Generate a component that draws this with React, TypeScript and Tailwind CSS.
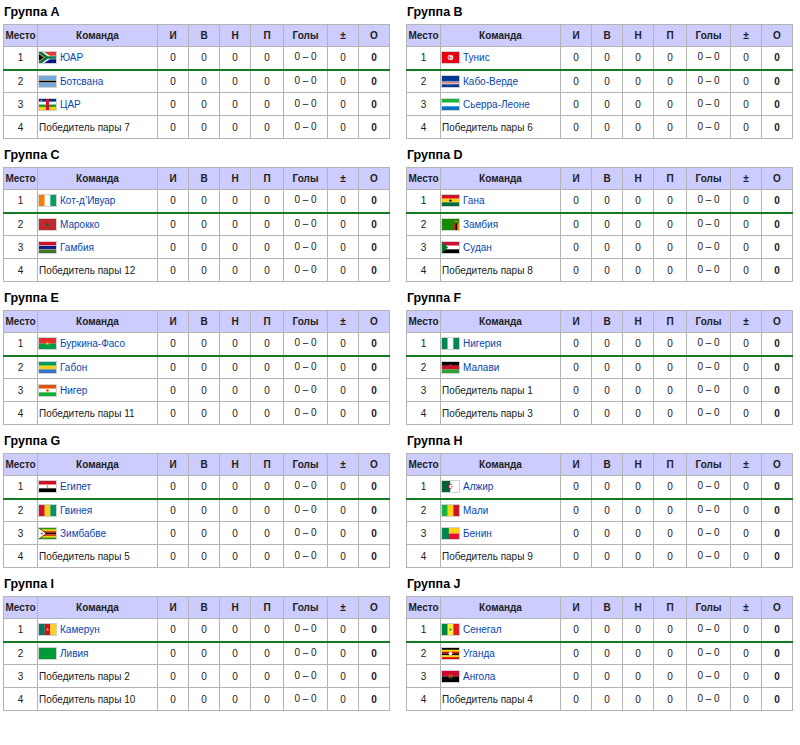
import type { ReactNode } from 'react'

type Row = { team: string; flag?: string }
type Group = { name: string; rows: Row[] }

const groups: Group[] = [
  { name: 'A', rows: [{ team: 'ЮАР', flag: 'za' }, { team: 'Ботсвана', flag: 'bw' }, { team: 'ЦАР', flag: 'cf' }, { team: 'Победитель пары 7' }] },
  { name: 'B', rows: [{ team: 'Тунис', flag: 'tn' }, { team: 'Кабо-Верде', flag: 'cv' }, { team: 'Сьерра-Леоне', flag: 'sl' }, { team: 'Победитель пары 6' }] },
  { name: 'C', rows: [{ team: 'Кот-д’Ивуар', flag: 'ci' }, { team: 'Марокко', flag: 'ma' }, { team: 'Гамбия', flag: 'gm' }, { team: 'Победитель пары 12' }] },
  { name: 'D', rows: [{ team: 'Гана', flag: 'gh' }, { team: 'Замбия', flag: 'zm' }, { team: 'Судан', flag: 'sd' }, { team: 'Победитель пары 8' }] },
  { name: 'E', rows: [{ team: 'Буркина-Фасо', flag: 'bf' }, { team: 'Габон', flag: 'ga' }, { team: 'Нигер', flag: 'ne' }, { team: 'Победитель пары 11' }] },
  { name: 'F', rows: [{ team: 'Нигерия', flag: 'ng' }, { team: 'Малави', flag: 'mw' }, { team: 'Победитель пары 1' }, { team: 'Победитель пары 3' }] },
  { name: 'G', rows: [{ team: 'Египет', flag: 'eg' }, { team: 'Гвинея', flag: 'gn' }, { team: 'Зимбабве', flag: 'zw' }, { team: 'Победитель пары 5' }] },
  { name: 'H', rows: [{ team: 'Алжир', flag: 'dz' }, { team: 'Мали', flag: 'ml' }, { team: 'Бенин', flag: 'bj' }, { team: 'Победитель пары 9' }] },
  { name: 'I', rows: [{ team: 'Камерун', flag: 'cm' }, { team: 'Ливия', flag: 'ly' }, { team: 'Победитель пары 2' }, { team: 'Победитель пары 10' }] },
  { name: 'J', rows: [{ team: 'Сенегал', flag: 'sn' }, { team: 'Уганда', flag: 'ug' }, { team: 'Ангола', flag: 'ao' }, { team: 'Победитель пары 4' }] },
]

// stripe helpers, viewBox is 90x60
function hStripes(colors: string[]) {
  const h = 60 / colors.length
  return colors.map((c, i) => <rect key={i} x="0" y={i * h} width="90" height={h + 0.5} fill={c} />)
}
function vStripes(colors: string[]) {
  const w = 90 / colors.length
  return colors.map((c, i) => <rect key={i} x={i * w} y="0" width={w + 0.5} height="60" fill={c} />)
}
const star = (cx: number, cy: number, r: number, fill: string) => {
  const pts = []
  for (let i = 0; i < 10; i++) {
    const a = (Math.PI / 5) * i - Math.PI / 2
    const rr = i % 2 === 0 ? r : r * 0.4
    pts.push(`${cx + rr * Math.cos(a)},${cy + rr * Math.sin(a)}`)
  }
  return <polygon points={pts.join(' ')} fill={fill} />
}

const flags: Record<string, ReactNode> = {
  za: (
    <>
      <rect width="90" height="30" fill="#e03c31" />
      <rect y="30" width="90" height="30" fill="#001489" />
      <polygon points="0,0 27,0 57,20 90,20 90,40 57,40 27,60 0,60" fill="#fff" />
      <polygon points="0,0 16,0 46,23 90,23 90,37 46,37 16,60 0,60" fill="#007749" />
      <polygon points="0,7 31,30 0,53" fill="#ffb612" />
      <polygon points="0,12 25,30 0,48" fill="#000" />
    </>
  ),
  bw: (
    <>
      <rect width="90" height="60" fill="#75aadb" />
      <rect y="22" width="90" height="16" fill="#fff" />
      <rect y="25" width="90" height="10" fill="#000" />
    </>
  ),
  cf: (
    <>
      {hStripes(['#003082', '#fff', '#289728', '#ffce00'])}
      <rect x="37" width="16" height="60" fill="#d21034" />
      {star(12, 7.5, 6, '#ffce00')}
    </>
  ),
  tn: (
    <>
      <rect width="90" height="60" fill="#e70013" />
      <circle cx="45" cy="30" r="15" fill="#fff" />
      <circle cx="45" cy="30" r="11" fill="#e70013" />
      <circle cx="48" cy="30" r="9" fill="#fff" />
      {star(48, 30, 6, '#e70013')}
    </>
  ),
  cv: (
    <>
      <rect width="90" height="60" fill="#003893" />
      <rect y="30" width="90" height="15" fill="#fff" />
      <rect y="35" width="90" height="5" fill="#cf2027" />
      <circle cx="34" cy="38" r="14" fill="none" stroke="#f7d116" strokeWidth="2" strokeDasharray="2 4" />
    </>
  ),
  sl: <>{hStripes(['#1eb53a', '#fff', '#0072c6'])}</>,
  ci: <>{vStripes(['#f77f00', '#fff', '#009e60'])}</>,
  ma: (
    <>
      <rect width="90" height="60" fill="#c1272d" />
      {star(45, 30, 12, '#006233')}
    </>
  ),
  gm: (
    <>
      <rect width="90" height="60" fill="#ce1126" />
      <rect y="18" width="90" height="24" fill="#fff" />
      <rect y="21" width="90" height="18" fill="#0c1c8c" />
      <rect y="42" width="90" height="18" fill="#3a7728" />
    </>
  ),
  gh: (
    <>
      {hStripes(['#ce1126', '#fcd116', '#006b3f'])}
      {star(45, 30, 10, '#000')}
    </>
  ),
  zm: (
    <>
      <rect width="90" height="60" fill="#198a00" />
      <rect x="63" y="24" width="9" height="36" fill="#de2010" />
      <rect x="72" y="24" width="9" height="36" fill="#000" />
      <rect x="81" y="24" width="9" height="36" fill="#ef7d00" />
      <ellipse cx="76" cy="14" rx="9" ry="4" fill="#ef7d00" />
    </>
  ),
  sd: (
    <>
      {hStripes(['#d21034', '#fff', '#000'])}
      <polygon points="0,0 32,30 0,60" fill="#007229" />
    </>
  ),
  bf: (
    <>
      {hStripes(['#ef2b2d', '#009e49'])}
      {star(45, 30, 11, '#fcd116')}
    </>
  ),
  ga: <>{hStripes(['#009e60', '#fcd116', '#3a75c4'])}</>,
  ne: (
    <>
      {hStripes(['#e05206', '#fff', '#0db02b'])}
      <circle cx="45" cy="30" r="7" fill="#e05206" />
    </>
  ),
  ng: <>{vStripes(['#008751', '#fff', '#008751'])}</>,
  mw: (
    <>
      {hStripes(['#000', '#ce1126', '#339e35'])}
      <circle cx="45" cy="20" r="9" fill="#ce1126" />
    </>
  ),
  eg: (
    <>
      {hStripes(['#ce1126', '#fff', '#000'])}
      <rect x="41" y="24" width="8" height="12" fill="#c09300" />
    </>
  ),
  gn: <>{vStripes(['#ce1126', '#fcd116', '#009460'])}</>,
  zw: (
    <>
      {hStripes(['#319208', '#ffd200', '#de2010', '#000', '#de2010', '#ffd200', '#319208'])}
      <polygon points="0,0 40,30 0,60" fill="#000" />
      <polygon points="0,3 36,30 0,57" fill="#fff" />
      {star(14, 30, 8, '#de2010')}
    </>
  ),
  dz: (
    <>
      <rect width="45" height="60" fill="#006233" />
      <rect x="45" width="45" height="60" fill="#fff" />
      <circle cx="45" cy="30" r="13" fill="#d21034" />
      <circle cx="49" cy="30" r="10.5" fill="#fff" />
      {star(52, 30, 6, '#d21034')}
    </>
  ),
  ml: <>{vStripes(['#14b53a', '#fcd116', '#ce1126'])}</>,
  bj: (
    <>
      <rect width="90" height="30" fill="#fcd116" />
      <rect y="30" width="90" height="30" fill="#e8112d" />
      <rect width="36" height="60" fill="#008751" />
    </>
  ),
  cm: (
    <>
      {vStripes(['#007a5e', '#ce1126', '#fcd116'])}
      {star(45, 30, 9, '#fcd116')}
    </>
  ),
  ly: <rect width="90" height="60" fill="#009a3a" />,
  sn: (
    <>
      {vStripes(['#00853f', '#fdef42', '#e31b23'])}
      {star(45, 30, 9, '#00853f')}
    </>
  ),
  ug: (
    <>
      {hStripes(['#000', '#fcdc04', '#d90000', '#000', '#fcdc04', '#d90000'])}
      <circle cx="45" cy="30" r="10" fill="#fff" />
    </>
  ),
  ao: (
    <>
      {hStripes(['#cc092f', '#000'])}
      <circle cx="45" cy="30" r="9" fill="none" stroke="#ffcb00" strokeWidth="3" />
    </>
  ),
}

function Flag({ code }: { code: string }) {
  return (
    <svg
      width="17"
      height="11"
      viewBox="0 0 90 60"
      preserveAspectRatio="none"
      className="shrink-0 outline outline-1 outline-[#d0d0d0]"
    >
      {flags[code]}
    </svg>
  )
}

const headers = ['Место', 'Команда', 'И', 'В', 'Н', 'П', 'Голы', '±', 'О']

function GroupTable({ group }: { group: Group }) {
  return (
    <section className="mb-[4px]">
      <h3 className="h-[24px] flex items-center pl-[1px] text-[12.5px] font-bold text-black">
        Группа {group.name}
      </h3>
      <table className="w-[386px] table-fixed border-collapse border border-[#b4b4b4] text-[10px] text-[#202122]">
        <colgroup>
          <col className="w-[34px]" />
          <col className="w-[120px]" />
          <col className="w-[31px]" />
          <col className="w-[31px]" />
          <col className="w-[31px]" />
          <col className="w-[33px]" />
          <col className="w-[44px]" />
          <col className="w-[31px]" />
          <col className="w-[31px]" />
        </colgroup>
        <thead>
          <tr className="h-[22px] bg-[#ccccff]">
            {headers.map((h) => (
              <th key={h} className="border border-[#b4b4b4] p-0 text-center font-bold">
                {h}
              </th>
            ))}
          </tr>
        </thead>
        <tbody>
          {group.rows.map((row, i) => {
            const cell =
              i === 0
                ? 'border border-[#b4b4b4] border-b-2 border-b-[#157a22] p-0 text-center'
                : 'border border-[#b4b4b4] p-0 text-center'
            return (
              <tr key={i} className="h-[23px] bg-white">
                <td className={cell}>{i + 1}</td>
                <td className={cell + ' !text-left'}>
                  <div className="flex items-center gap-[4px] pl-[1px] whitespace-nowrap">
                    {row.flag && <Flag code={row.flag} />}
                    <span className={row.flag ? 'text-[#0645ad]' : ''}>{row.team}</span>
                  </div>
                </td>
                <td className={cell}>0</td>
                <td className={cell}>0</td>
                <td className={cell}>0</td>
                <td className={cell}>0</td>
                <td className={cell}>
                  <span className="relative -top-[1px]">0 – 0</span>
                </td>
                <td className={cell}>0</td>
                <td className={cell + ' font-bold'}>0</td>
              </tr>
            )
          })}
        </tbody>
      </table>
    </section>
  )
}

export default function App() {
  return (
    <div
      className="w-[800px] h-[745px] bg-white pl-[3px]"
      style={{ fontFamily: '"Liberation Sans", Arial, sans-serif' }}
    >
      <div className="grid grid-cols-[386px_386px] gap-x-[17px]">
        {groups.map((g) => (
          <GroupTable key={g.name} group={g} />
        ))}
      </div>
    </div>
  )
}
